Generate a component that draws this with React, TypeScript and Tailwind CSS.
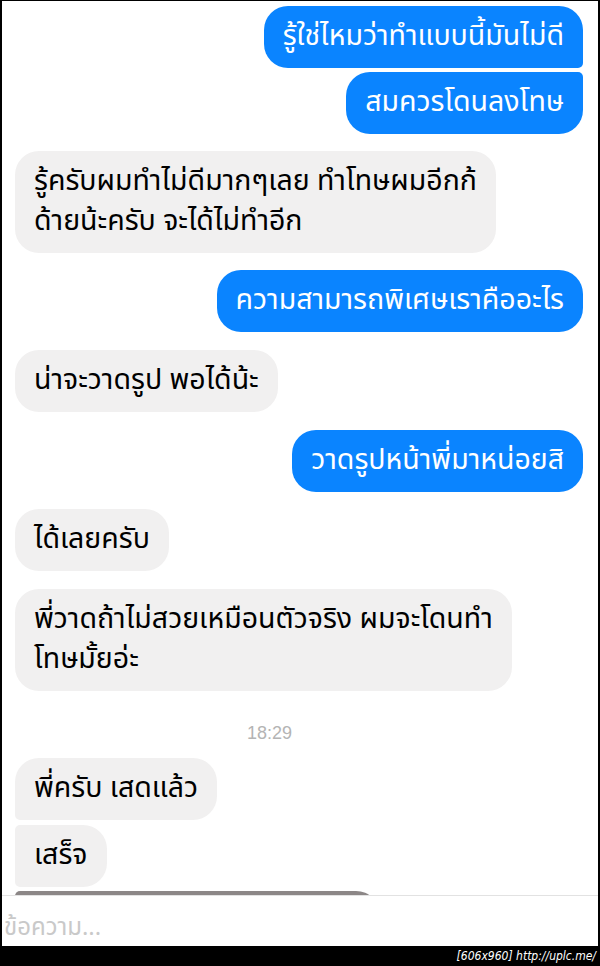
import React from 'react';

// --- Burbuja de chat ---
const Bubble: React.FC<{ me?: boolean; className?: string; children: React.ReactNode }> = ({ me, className = '', children }) => (
  <div className={`flex ${me ? 'justify-end' : 'justify-start'}`}>
    <div
      className={`px-[19px] py-[11px] text-[28.5px] leading-[40px] whitespace-nowrap ${
        me ? 'bg-[#0a84ff] text-white' : 'bg-[#f1f0f0] text-black'
      } ${className}`}
    >
      {children}
    </div>
  </div>
);

const App: React.FC = () => {
  return (
    <div className="w-[600px] h-[966px] bg-black pt-[1px] px-[2px] flex flex-col font-['Noto_Sans_Thai','Noto_Sans','Liberation_Sans',sans-serif]">
      <div className="bg-white flex flex-col h-[945px]">
        {/* mensajes */}
        <div className="h-[894px] overflow-hidden pl-[13px] pr-[15px] pt-[5px] flex flex-col">
          <Bubble me className="rounded-[24px] rounded-br-[5px]">รู้ใช่ไหมว่าทำแบบนี้มันไม่ดี</Bubble>
          <div className="mt-[4px]">
            <Bubble me className="rounded-[24px] rounded-tr-[5px]">สมควรโดนลงโทษ</Bubble>
          </div>
          <div className="mt-[17px]">
            <Bubble className="rounded-[24px]">
              รู้ครับผมทำไม่ดีมากๆเลย ทำโทษผมอีกก้
              <br />
              ด้ายน้ะครับ จะได้ไม่ทำอีก
            </Bubble>
          </div>
          <div className="mt-[17px]">
            <Bubble me className="rounded-[24px]">ความสามารถพิเศษเราคืออะไร</Bubble>
          </div>
          <div className="mt-[18px]">
            <Bubble className="rounded-[24px]">น่าจะวาดรูป พอได้น้ะ</Bubble>
          </div>
          <div className="mt-[18px]">
            <Bubble me className="rounded-[24px]">วาดรูปหน้าพี่มาหน่อยสิ</Bubble>
          </div>
          <div className="mt-[17px]">
            <Bubble className="rounded-[24px]">ได้เลยครับ</Bubble>
          </div>
          <div className="mt-[18px]">
            <Bubble className="rounded-[24px]">
              พี่วาดถ้าไม่สวยเหมือนตัวจริง ผมจะโดนทำ
              <br />
              โทษมั้ยอ่ะ
            </Bubble>
          </div>
          {/* hora */}
          <div className="mt-[30px] pl-[232px] h-[24px] text-[18px] leading-[24px] text-[#b4b4b4] font-['Liberation_Sans',sans-serif]">
            18:29
          </div>
          <div className="mt-[13px]">
            <Bubble className="rounded-[24px] rounded-bl-[5px]">พี่ครับ เสดแล้ว</Bubble>
          </div>
          <div className="mt-[5px]">
            <Bubble className="rounded-[24px] rounded-tl-[5px] rounded-bl-[5px]">เสร็จ</Bubble>
          </div>
          <div className="mt-[4px] flex">
            <div className="w-[365px] h-[80px] shrink-0 bg-[#8c8787] rounded-[24px] rounded-tl-[5px]" />
          </div>
        </div>
        {/* entrada */}
        <div className="h-[51px] border-t border-[#e2e2e2] overflow-hidden pt-[17px] pl-[2px]">
          <div className="text-[24px] leading-[30px] text-[#c9c9c9] whitespace-nowrap">ข้อความ...</div>
        </div>
      </div>
      {/* barra inferior */}
      <div className="h-[20px] flex items-center justify-end pr-[2px] text-white text-[12px] italic font-['DejaVu_Sans_Condensed','Liberation_Sans',sans-serif]">
        [606x960] http://uplc.me/
      </div>
    </div>
  );
};

export default App;
